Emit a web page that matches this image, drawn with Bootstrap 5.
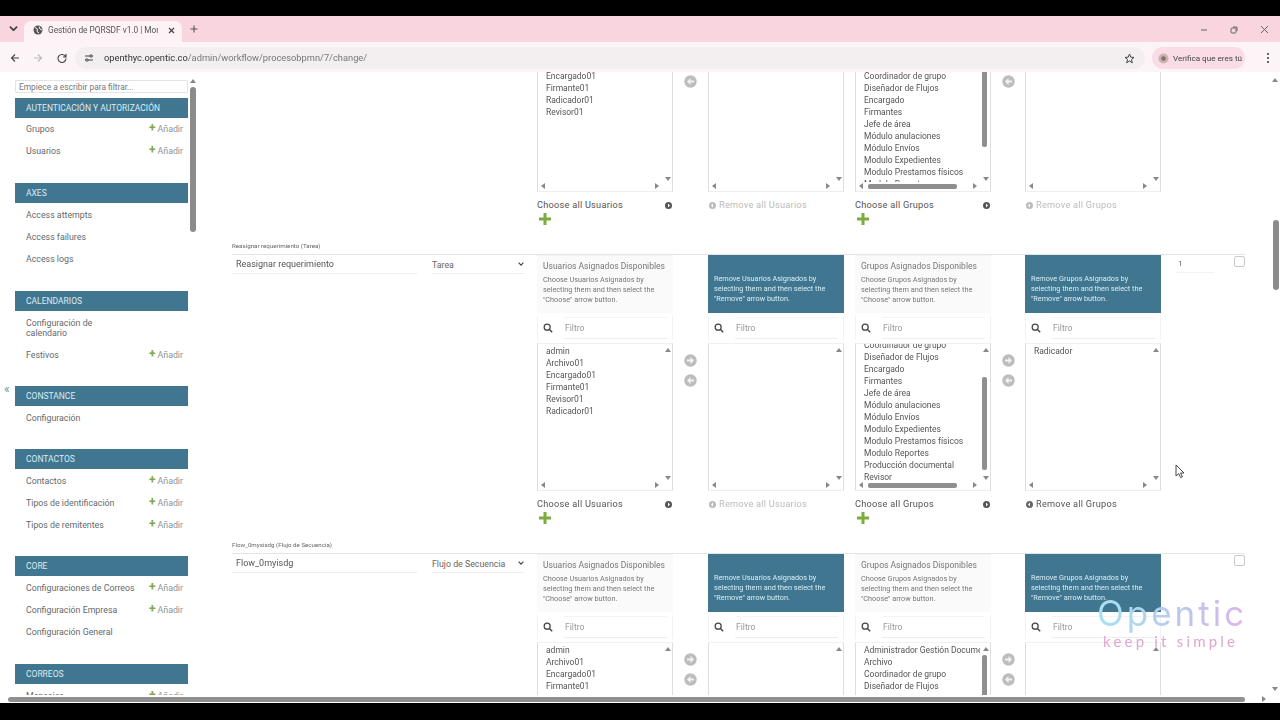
<!DOCTYPE html>
<html lang="es"><head><meta charset="utf-8"><title>Gestión de PQRSDF v1.0</title>
<link rel="stylesheet" href="https://cdn.jsdelivr.net/npm/bootstrap@5.3.0/dist/css/bootstrap.min.css">
<style>
html,body{margin:0;height:720px;overflow:hidden;background:#000}
body{font-family:Roboto,"Liberation Sans",sans-serif;font-size:9px;color:#555}
.shell{width:1280px;height:720px}
.cinema-t{height:16px;background:#000}.cinema-b{height:17px;background:#000}
.tabstrip{height:26px;background:#f9d5e0;padding-left:9px;color:#444}
.nudge{margin-top:9px}
.tabitem{width:158px;height:21px;margin:5px 0 0 6px;background:#fdf3f6;border-radius:7px 7px 0 0;padding:0 7px 3px 9px;font-size:8.3px;white-space:nowrap;overflow:hidden}
.tabname{width:110px;overflow:hidden;margin-left:5px;color:#555}
.winctl{margin-left:auto;gap:22px;padding-right:11px}
.toolbar{height:30px;background:#fdf4f7;padding:2px 10px 0 10px;color:#555}
.omni{width:1070px;height:22px;background:#f3eff0;border-radius:11px;margin-left:8px;padding:0 10px 0 9px;font-size:9.3px;color:#777}
.omni b{font-weight:400;color:#333}
.gap13{margin-left:13px}.gap14{margin-left:14px}.gap10{margin-left:10px}
.verify{width:93px;height:22px;border-radius:11px;background:#f9dce6;margin-left:7px;padding-left:6px;font-size:8.1px;color:#444;white-space:nowrap}
.page{height:623px;background:#fff;overflow:hidden}
.side{width:197px;flex:none;padding:8px 0 0 15px;overflow:hidden;position:relative}
.side-in{width:173px}
.side-filter{height:13px;border:1px solid #e3e3e3;border-radius:1px;font-size:8.4px;padding:0 3px;width:100%;display:block;color:#666;margin-bottom:5px;outline:0}
.side-filter::placeholder{color:#777}
.sect{margin-bottom:20.25px}
.sect:first-of-type{margin-bottom:21.25px}
.sect:first-of-type .sect-h{margin-bottom:0}
.sect-h{height:20px;line-height:20px;background:#417690;color:#d9eef6;padding-left:11px;font-size:8.5px;text-transform:uppercase;margin-bottom:1px}
.sect-r{min-height:22px;padding:6px 5px 6px 11px;font-size:8.8px;color:#5f6a6e;line-height:10px}
.sect-r span:first-child{max-width:90px}
.wadd{color:#8a9499;font-size:8.8px;white-space:nowrap}
.wadd i{color:#7eab3f;font-style:normal;font-weight:700;font-size:12px;margin-right:2px;line-height:8px}
.sbar{position:absolute;background:#8b8b8b;border-radius:3px}
.sbar-s{left:190px;top:15px;width:6px;height:145px}
.arr{position:absolute;width:0;height:0;border-left:3px solid transparent;border-right:3px solid transparent}
.arr.up{border-bottom:4px solid #888}.arr.dn{border-top:4px solid #888}
.arr.lf,.arr.rt{border-top:3px solid transparent;border-bottom:3px solid transparent;border-left:0;border-right:0}
.arr.lf{border-right:4px solid #888}.arr.rt{border-left:4px solid #888}
.fold{position:absolute;left:4px;top:310px;font-size:12px;color:#778f9a;line-height:14px}
.main{width:1073px;flex:none;padding-left:35px;margin-top:-133px}
.flowrow{height:299px;width:1013px}
.flowlabel{height:16px;font-size:6.2px;line-height:14px;color:#666;white-space:nowrap;padding-top:1px}
.flowbody{border-top:1px solid #e4e4e4;padding-top:0}
.namecell{width:186px;height:19px;margin-top:0;border:0;border-bottom:1px solid #efefef;padding:0 4px;font-size:9px;color:#555;line-height:18px;outline:0;background:#fff}
.typecell{width:93px;height:19px;margin-left:14px;font-size:8.8px;color:#666;border:0;padding:1px 0 0;border-bottom:1px solid #efefef;outline:0;background:#fff;line-height:18px;position:relative}
.typecell svg{position:absolute;right:1px;top:7px}
.pick{width:136px;flex:none}
.pick-h{height:58px;padding:5px 6px;background:#fafafa;color:#777;font-size:7.3px;line-height:10px;border-top:1px solid #f3f3f3;overflow:hidden}
.pick-h h6{font-size:8.5px;font-weight:400;line-height:11px;margin:0 0 3px;color:#777;height:11px;white-space:nowrap}
.pick-h p{margin:0}
.pick-h.tone{background:#417690;color:#d6eef7;border:0}
.pick-f{height:24px;margin:3px 0 3px;padding:0 5px 0 5px;border-left:1px solid #f2f2f2;border-right:1px solid #f2f2f2}
.pick-f input{width:103px;height:22px;margin-left:11px;border:0;border-bottom:1px solid #eee;border-top:1px solid #f4f4f4;font-size:8.6px;padding:0 1px;outline:0;background:#fff}
.pick-f input::placeholder{color:#999}
.pick-l{height:148px;border:1px solid #dedede;border-top-color:#f1f1f1;border-bottom-color:#eee;overflow:hidden;padding:1px 0 0 8px;font-size:8.5px;line-height:12px;color:#555;white-space:nowrap;position:relative}
.pick-l .lift{margin-top:-30px}
.vtrack{position:absolute;right:0;top:0;bottom:8px;width:10px;background:#fff}
.htrack{position:absolute;left:0;right:0;bottom:0;height:9px;background:#fff}
.vthumb{position:absolute;right:3px;width:5px;background:#8f8f8f;border-radius:2px}
.hthumb{position:absolute;height:5px;top:2px;background:#8f8f8f;border-radius:2px}
.pick-a{height:14px;margin-top:6px;font-size:9.2px;letter-spacing:.25px;line-height:14px;color:#555;padding-right:1px;white-space:nowrap}
.pick-a.off{color:#bbb;justify-content:flex-start!important;padding-left:1px}
.pick-a.on{justify-content:flex-start!important;padding-left:1px}
.pick-a.off svg,.pick-a.on svg{margin-right:3px}
.pick-p{height:14px;padding-left:2px}
.mover{width:35px;flex:none;padding-top:99px;gap:7px}
.mover.tight{width:34px}
.mover2{width:11px;flex:none}
.mv{width:13px;height:13px;display:block}
.ordercell{width:38px;height:18px;margin-left:15px;border-bottom:1px solid #f3f3f3;font-size:8px;color:#666;padding:0 2px;line-height:18px}
.checker{width:11px;height:11px;border:1px solid #c9c9c9;border-radius:2px;margin:1px 0 0 20px;background:#fff}
.vscroll{position:relative;width:10px;flex:none;background:#fff}
.vs-thumb{position:absolute;left:3px;top:148px;width:6px;height:70px;background:#8b8b8b;border-radius:3px}
.hscroll{height:8px;background:#fff;position:relative}
.hs-thumb{position:absolute;left:8px;top:2px;width:1237px;height:5px;background:#8f8f8f;border-radius:3px}
.brand{position:absolute;left:1097px;top:593px;width:148px;pointer-events:none;line-height:1}
.brand-a{font-family:Inter,sans-serif;font-weight:400;font-size:35px;line-height:41px;letter-spacing:3px;white-space:nowrap;background:linear-gradient(90deg,#a5e3f2,#b8c8ee 55%,#dcb5ec);-webkit-background-clip:text;background-clip:text;color:transparent}
.brand-b{font-family:Lato,sans-serif;font-size:15px;letter-spacing:3.2px;color:#e0a6d0;white-space:nowrap;line-height:14px;margin:0 0 0 6px}
.cursor{position:absolute;left:1175px;top:464px}
.soften{filter:blur(.45px)}
</style></head>
<body>
<svg width="0" height="0" class="position-absolute"><defs>
<symbol id="mv" viewBox="0 0 13 13"><circle cx="6.5" cy="6.5" r="6.2" fill="#bdbdbd"/><path d="M6.5 3 3 6.5 6.5 10V7.6H10V5.4H6.5z" fill="#f2f2f2"/></symbol>
<symbol id="mr" viewBox="0 0 13 13"><circle cx="6.5" cy="6.5" r="6.2" fill="#bdbdbd"/><path d="M6.5 3 10 6.5 6.5 10V7.6H3V5.4H6.5z" fill="#f2f2f2"/></symbol>
<symbol id="mg" viewBox="0 0 12 12"><circle cx="5" cy="5" r="3.6" fill="none" stroke="#444" stroke-width="1.5"/><path d="M8 8l3 3" stroke="#444" stroke-width="1.7"/></symbol>
<symbol id="pl" viewBox="0 0 12 12"><path d="M4.5 0h3v4.5H12v3H7.500V12h-3V7.500H0v-3h4.500z" fill="#7eab3f"/></symbol>
<symbol id="ch" viewBox="0 0 7 7"><circle cx="3.500" cy="3.500" r="3.500" fill="#555"/><path d="M3 1.500 5 3.500 3 5.500z" fill="#fff"/></symbol>
<symbol id="rm" viewBox="0 0 7 7"><circle cx="3.500" cy="3.500" r="3.500" fill="#666"/><path d="M4 1.500 2 3.500 4 5.500z" fill="#fff"/></symbol>
<symbol id="rg" viewBox="0 0 7 7"><circle cx="3.500" cy="3.500" r="3.500" fill="#bbb"/><path d="M4 1.500 2 3.500 4 5.500z" fill="#fff"/></symbol>
<symbol id="dn" viewBox="0 0 8 5"><path d="M.8.8 4 4 7.200.8" fill="none" stroke="#444" stroke-width="1.500"/></symbol>
</defs></svg>
<div class="shell d-flex flex-column position-relative">
<div class="cinema-t"></div>
<div class="tabstrip d-flex align-items-start soften">
 <svg class="nudge" width="9" height="7" viewBox="0 0 8 5"><use href="#dn"/></svg>
 <div class="tabitem d-flex align-items-center">
  <svg width="10" height="10" viewBox="0 0 10 10"><circle cx="5" cy="5" r="4.500" fill="#555"/><path d="M2 2.500 4.500 4 4 6.500 6 8M6 1.500 7 4 9 5" stroke="#fdf3f6" fill="none"/></svg>
  <span class="tabname">Gestión de PQRSDF v1.0 | Mon</span>
  <svg class="ms-auto" width="7" height="7" viewBox="0 0 7 7"><path d="M1 1l5 5M6 1 1 6" stroke="#444" stroke-width="1.200"/></svg>
 </div>
 <svg class="nudge ms-2" width="8" height="8" viewBox="0 0 8 8"><path d="M4 .5v7M.5 4h7" stroke="#555" stroke-width="1.100"/></svg>
 <div class="winctl d-flex align-items-center nudge">
  <svg width="8" height="8" viewBox="0 0 8 8"><path d="M1 4h6" stroke="#666"/></svg>
  <svg width="8" height="8" viewBox="0 0 8 8"><rect x="1" y="2" width="5" height="5" rx="1" fill="none" stroke="#666"/><path d="M3 1h4v4" fill="none" stroke="#666"/></svg>
  <svg width="9" height="9" viewBox="0 0 9 9"><path d="M1 1l7 7M8 1 1 8" stroke="#666"/></svg>
 </div>
</div>
<div class="toolbar d-flex align-items-center soften">
 <svg width="10" height="10" viewBox="0 0 10 10"><path d="M9 5H1.500M5 1.500 1.500 5 5 8.500" fill="none" stroke="#444" stroke-width="1.100"/></svg>
 <svg class="gap13" width="10" height="10" viewBox="0 0 10 10"><path d="M1 5h7.500M5 1.500 8.500 5 5 8.500" fill="none" stroke="#bbb" stroke-width="1.100"/></svg>
 <svg class="gap14" width="10" height="10" viewBox="0 0 10 10"><path d="M8.500 3.500A4 4 0 1 0 9 5.500M9 1v3H6" fill="none" stroke="#444" stroke-width="1.100"/></svg>
 <div class="omni d-flex align-items-center">
  <svg width="10" height="10" viewBox="0 0 10 10"><path d="M1 3h5M8 3h1M1 7h1M4 7h5" stroke="#444"/><circle cx="7" cy="3" r="1.200" fill="none" stroke="#444"/><circle cx="3" cy="7" r="1.200" fill="none" stroke="#444"/></svg>
  <span class="gap10"><b>openthyc.opentic.co</b>/admin/workflow/procesobpmn/7/change/</span>
  <svg class="ms-auto" width="11" height="11" viewBox="0 0 11 11"><path d="M5.500 1 6.800 4.200 10 4.400 7.500 6.500 8.300 9.800 5.500 8 2.700 9.800 3.500 6.500 1 4.400 4.200 4.200z" fill="none" stroke="#444"/></svg>
 </div>
 <div class="verify d-flex align-items-center">
  <svg width="11" height="11" viewBox="0 0 11 11" class="me-1"><circle cx="5.500" cy="5.500" r="5" fill="#a98" opacity=".6"/><circle cx="5.500" cy="5.500" r="2.300" fill="#8c6a78"/></svg>
  Verifica que eres tú
 </div>
 <svg class="ms-auto" width="4" height="12" viewBox="0 0 4 12"><circle cx="2" cy="2" r="1.100" fill="#444"/><circle cx="2" cy="6" r="1.100" fill="#444"/><circle cx="2" cy="10" r="1.100" fill="#444"/></svg>
</div>
<div class="page d-flex soften">
 <aside class="side">
  <div class="side-in">
  <input class="side-filter" placeholder="Empiece a escribir para filtrar...">
  <div class="sect"><div class="sect-h">Autenticación y autorización</div>
   <div class="sect-r d-flex align-items-center justify-content-between"><span>Grupos</span><span class="wadd"><i>+</i>Añadir</span></div>
   <div class="sect-r d-flex align-items-center justify-content-between"><span>Usuarios</span><span class="wadd"><i>+</i>Añadir</span></div></div>
  <div class="sect"><div class="sect-h">Axes</div>
   <div class="sect-r d-flex align-items-center"><span>Access attempts</span></div>
   <div class="sect-r d-flex align-items-center"><span>Access failures</span></div>
   <div class="sect-r d-flex align-items-center"><span>Access logs</span></div></div>
  <div class="sect"><div class="sect-h">Calendarios</div>
   <div class="sect-r d-flex align-items-center"><span>Configuración de calendario</span></div>
   <div class="sect-r d-flex align-items-center justify-content-between"><span>Festivos</span><span class="wadd"><i>+</i>Añadir</span></div></div>
  <div class="sect"><div class="sect-h">Constance</div>
   <div class="sect-r d-flex align-items-center"><span>Configuración</span></div></div>
  <div class="sect"><div class="sect-h">Contactos</div>
   <div class="sect-r d-flex align-items-center justify-content-between"><span>Contactos</span><span class="wadd"><i>+</i>Añadir</span></div>
   <div class="sect-r d-flex align-items-center justify-content-between"><span class="text-nowrap">Tipos de identificación</span><span class="wadd"><i>+</i>Añadir</span></div>
   <div class="sect-r d-flex align-items-center justify-content-between"><span>Tipos de remitentes</span><span class="wadd"><i>+</i>Añadir</span></div></div>
  <div class="sect"><div class="sect-h">Core</div>
   <div class="sect-r d-flex align-items-center justify-content-between"><span class="text-nowrap">Configuraciones de Correos</span><span class="wadd"><i>+</i>Añadir</span></div>
   <div class="sect-r d-flex align-items-center justify-content-between"><span class="text-nowrap">Configuración Empresa</span><span class="wadd"><i>+</i>Añadir</span></div>
   <div class="sect-r d-flex align-items-center"><span class="text-nowrap">Configuración General</span></div></div>
  <div class="sect"><div class="sect-h">Correos</div>
   <div class="sect-r d-flex align-items-center justify-content-between"><span>Mensajes</span><span class="wadd"><i>+</i>Añadir</span></div></div>
  </div>
  <span class="arr up" style="left:190px;top:7px"></span>
  <span class="sbar sbar-s"></span>
  <span class="fold">«</span>
 </aside>
 <main class="main">

  <!-- row 1 -->
  <section class="flowrow">
   <div class="flowlabel">Registrar requerimiento (Tarea)</div>
   <div class="flowbody d-flex align-items-start">
    <div class="namecell">Registrar requerimiento</div>
    <div class="typecell">Tarea<svg width="6" height="4"><use href="#dn"/></svg></div>
    <div class="ms-auto"></div>
    <div class="pick ms-2"><div class="pick-h"><h6>Usuarios Asignados Disponibles</h6><p>Choose Usuarios Asignados by selecting them and then select the "Choose" arrow button.</p></div>
     <div class="pick-f d-flex align-items-center"><svg width="12" height="12"><use href="#mg"/></svg><input placeholder="Filtro"></div>
     <div class="pick-l"><div>admin</div><div>Archivo01</div><div>Encargado01</div><div>Firmante01</div><div>Radicador01</div><div>Revisor01</div>
      <div class="vtrack"><span class="arr up" style="right:1px;top:4px"></span><span class="arr dn" style="right:1px;bottom:2px"></span></div>
      <div class="htrack"><span class="arr lf" style="left:3px;top:1px"></span><span class="arr rt" style="right:13px;top:1px"></span></div></div>
     <div class="pick-a d-flex justify-content-between align-items-center"><span>Choose all Usuarios</span><svg width="7" height="7"><use href="#ch"/></svg></div>
     <div class="pick-p"><svg width="12" height="12"><use href="#pl"/></svg></div></div>
    <div class="mover d-flex flex-column align-items-center"><svg class="mv"><use href="#mr"/></svg><svg class="mv"><use href="#mv"/></svg></div>
    <div class="pick"><div class="pick-h tone"><h6></h6><p>Remove Usuarios Asignados by selecting them and then select the "Remove" arrow button.</p></div>
     <div class="pick-f d-flex align-items-center"><svg width="12" height="12"><use href="#mg"/></svg><input placeholder="Filtro"></div>
     <div class="pick-l"><div class="vtrack"><span class="arr up" style="right:1px;top:4px"></span><span class="arr dn" style="right:1px;bottom:2px"></span></div>
      <div class="htrack"><span class="arr lf" style="left:3px;top:1px"></span><span class="arr rt" style="right:13px;top:1px"></span></div></div>
     <div class="pick-a off d-flex align-items-center"><svg width="7" height="7"><use href="#rg"/></svg><span>Remove all Usuarios</span></div></div>
    <div class="mover2"></div>
    <div class="pick"><div class="pick-h"><h6>Grupos Asignados Disponibles</h6><p>Choose Grupos Asignados by selecting them and then select the "Choose" arrow button.</p></div>
     <div class="pick-f d-flex align-items-center"><svg width="12" height="12"><use href="#mg"/></svg><input placeholder="Filtro"></div>
     <div class="pick-l"><div>Administrador Gestión Documental</div><div>Archivo</div><div>Coordinador de grupo</div><div>Diseñador de Flujos</div><div>Encargado</div><div>Firmantes</div><div>Jefe de área</div><div>Módulo anulaciones</div><div>Módulo Envíos</div><div>Modulo Expedientes</div><div>Modulo Prestamos físicos</div><div>Modulo Reportes</div><div>Producción documental</div><div>Revisor</div>
      <div class="vtrack"><span class="arr up" style="right:1px;top:4px"></span><span class="vthumb" style="top:12px;height:90px"></span><span class="arr dn" style="right:1px;bottom:2px"></span></div>
      <div class="htrack"><span class="arr lf" style="left:3px;top:1px"></span><span class="hthumb" style="left:12px;width:89px"></span><span class="arr rt" style="right:13px;top:1px"></span></div></div>
     <div class="pick-a d-flex justify-content-between align-items-center"><span>Choose all Grupos</span><svg width="7" height="7"><use href="#ch"/></svg></div>
     <div class="pick-p"><svg width="12" height="12"><use href="#pl"/></svg></div></div>
    <div class="mover tight d-flex flex-column align-items-center"><svg class="mv"><use href="#mr"/></svg><svg class="mv"><use href="#mv"/></svg></div>
    <div class="pick"><div class="pick-h tone"><h6></h6><p>Remove Grupos Asignados by selecting them and then select the "Remove" arrow button.</p></div>
     <div class="pick-f d-flex align-items-center"><svg width="12" height="12"><use href="#mg"/></svg><input placeholder="Filtro"></div>
     <div class="pick-l"><div class="vtrack"><span class="arr up" style="right:1px;top:4px"></span><span class="arr dn" style="right:1px;bottom:2px"></span></div>
      <div class="htrack"><span class="arr lf" style="left:3px;top:1px"></span><span class="arr rt" style="right:13px;top:1px"></span></div></div>
     <div class="pick-a off d-flex align-items-center"><svg width="7" height="7"><use href="#rg"/></svg><span>Remove all Grupos</span></div></div>
    <div class="ordercell"></div><div class="checker invisible"></div>
   </div>
  </section>

  <!-- row 2 -->
  <section class="flowrow">
   <div class="flowlabel">Reasignar requerimiento (Tarea)</div>
   <div class="flowbody d-flex align-items-start">
    <div class="namecell">Reasignar requerimiento</div>
    <div class="typecell">Tarea<svg width="6" height="4"><use href="#dn"/></svg></div>
    <div class="ms-auto"></div>
    <div class="pick ms-2"><div class="pick-h"><h6>Usuarios Asignados Disponibles</h6><p>Choose Usuarios Asignados by selecting them and then select the "Choose" arrow button.</p></div>
     <div class="pick-f d-flex align-items-center"><svg width="12" height="12"><use href="#mg"/></svg><input placeholder="Filtro"></div>
     <div class="pick-l"><div>admin</div><div>Archivo01</div><div>Encargado01</div><div>Firmante01</div><div>Revisor01</div><div>Radicador01</div>
      <div class="vtrack"><span class="arr up" style="right:1px;top:4px"></span><span class="arr dn" style="right:1px;bottom:2px"></span></div>
      <div class="htrack"><span class="arr lf" style="left:3px;top:1px"></span><span class="arr rt" style="right:13px;top:1px"></span></div></div>
     <div class="pick-a d-flex justify-content-between align-items-center"><span>Choose all Usuarios</span><svg width="7" height="7"><use href="#ch"/></svg></div>
     <div class="pick-p"><svg width="12" height="12"><use href="#pl"/></svg></div></div>
    <div class="mover d-flex flex-column align-items-center"><svg class="mv"><use href="#mr"/></svg><svg class="mv"><use href="#mv"/></svg></div>
    <div class="pick"><div class="pick-h tone"><h6></h6><p>Remove Usuarios Asignados by selecting them and then select the "Remove" arrow button.</p></div>
     <div class="pick-f d-flex align-items-center"><svg width="12" height="12"><use href="#mg"/></svg><input placeholder="Filtro"></div>
     <div class="pick-l"><div class="vtrack"><span class="arr up" style="right:1px;top:4px"></span><span class="arr dn" style="right:1px;bottom:2px"></span></div>
      <div class="htrack"><span class="arr lf" style="left:3px;top:1px"></span><span class="arr rt" style="right:13px;top:1px"></span></div></div>
     <div class="pick-a off d-flex align-items-center"><svg width="7" height="7"><use href="#rg"/></svg><span>Remove all Usuarios</span></div></div>
    <div class="mover2"></div>
    <div class="pick"><div class="pick-h"><h6>Grupos Asignados Disponibles</h6><p>Choose Grupos Asignados by selecting them and then select the "Choose" arrow button.</p></div>
     <div class="pick-f d-flex align-items-center"><svg width="12" height="12"><use href="#mg"/></svg><input placeholder="Filtro"></div>
     <div class="pick-l"><div class="lift">Administrador Gestión Documental</div><div>Archivo</div><div>Coordinador de grupo</div><div>Diseñador de Flujos</div><div>Encargado</div><div>Firmantes</div><div>Jefe de área</div><div>Módulo anulaciones</div><div>Módulo Envíos</div><div>Modulo Expedientes</div><div>Modulo Prestamos físicos</div><div>Modulo Reportes</div><div>Producción documental</div><div>Revisor</div>
      <div class="vtrack"><span class="arr up" style="right:1px;top:4px"></span><span class="vthumb" style="top:33px;height:93px"></span><span class="arr dn" style="right:1px;bottom:2px"></span></div>
      <div class="htrack"><span class="arr lf" style="left:3px;top:1px"></span><span class="hthumb" style="left:12px;width:89px"></span><span class="arr rt" style="right:13px;top:1px"></span></div></div>
     <div class="pick-a d-flex justify-content-between align-items-center"><span>Choose all Grupos</span><svg width="7" height="7"><use href="#ch"/></svg></div>
     <div class="pick-p"><svg width="12" height="12"><use href="#pl"/></svg></div></div>
    <div class="mover tight d-flex flex-column align-items-center"><svg class="mv"><use href="#mr"/></svg><svg class="mv"><use href="#mv"/></svg></div>
    <div class="pick"><div class="pick-h tone"><h6></h6><p>Remove Grupos Asignados by selecting them and then select the "Remove" arrow button.</p></div>
     <div class="pick-f d-flex align-items-center"><svg width="12" height="12"><use href="#mg"/></svg><input placeholder="Filtro"></div>
     <div class="pick-l"><div>Radicador</div><div class="vtrack"><span class="arr up" style="right:1px;top:4px"></span><span class="arr dn" style="right:1px;bottom:2px"></span></div>
      <div class="htrack"><span class="arr lf" style="left:3px;top:1px"></span><span class="arr rt" style="right:13px;top:1px"></span></div></div>
     <div class="pick-a on d-flex align-items-center"><svg width="7" height="7"><use href="#rm"/></svg><span>Remove all Grupos</span></div></div>
    <div class="ordercell">1</div><div class="checker"></div>
   </div>
  </section>

  <!-- row 3 -->
  <section class="flowrow">
   <div class="flowlabel">Flow_0mysisdg (Flujo de Secuencia)</div>
   <div class="flowbody d-flex align-items-start">
    <div class="namecell">Flow_0myisdg</div>
    <div class="typecell">Flujo de Secuencia<svg width="6" height="4"><use href="#dn"/></svg></div>
    <div class="ms-auto"></div>
    <div class="pick ms-2"><div class="pick-h"><h6>Usuarios Asignados Disponibles</h6><p>Choose Usuarios Asignados by selecting them and then select the "Choose" arrow button.</p></div>
     <div class="pick-f d-flex align-items-center"><svg width="12" height="12"><use href="#mg"/></svg><input placeholder="Filtro"></div>
     <div class="pick-l"><div>admin</div><div>Archivo01</div><div>Encargado01</div><div>Firmante01</div>
      <div class="vtrack"><span class="arr up" style="right:1px;top:4px"></span></div></div></div>
    <div class="mover d-flex flex-column align-items-center"><svg class="mv"><use href="#mr"/></svg><svg class="mv"><use href="#mv"/></svg></div>
    <div class="pick"><div class="pick-h tone"><h6></h6><p>Remove Usuarios Asignados by selecting them and then select the "Remove" arrow button.</p></div>
     <div class="pick-f d-flex align-items-center"><svg width="12" height="12"><use href="#mg"/></svg><input placeholder="Filtro"></div>
     <div class="pick-l"><div class="vtrack"><span class="arr up" style="right:1px;top:4px"></span></div></div></div>
    <div class="mover2"></div>
    <div class="pick"><div class="pick-h"><h6>Grupos Asignados Disponibles</h6><p>Choose Grupos Asignados by selecting them and then select the "Choose" arrow button.</p></div>
     <div class="pick-f d-flex align-items-center"><svg width="12" height="12"><use href="#mg"/></svg><input placeholder="Filtro"></div>
     <div class="pick-l"><div>Administrador Gestión Documental</div><div>Archivo</div><div>Coordinador de grupo</div><div>Diseñador de Flujos</div>
      <div class="vtrack"><span class="arr up" style="right:1px;top:4px"></span><span class="vthumb" style="top:12px;height:90px"></span></div></div></div>
    <div class="mover tight d-flex flex-column align-items-center"><svg class="mv"><use href="#mr"/></svg><svg class="mv"><use href="#mv"/></svg></div>
    <div class="pick"><div class="pick-h tone"><h6></h6><p>Remove Grupos Asignados by selecting them and then select the "Remove" arrow button.</p></div>
     <div class="pick-f d-flex align-items-center"><svg width="12" height="12"><use href="#mg"/></svg><input placeholder="Filtro"></div>
     <div class="pick-l"><div class="vtrack"><span class="arr up" style="right:1px;top:4px"></span></div></div></div>
    <div class="ordercell border-0"></div><div class="checker"></div>
   </div>
  </section>
 </main>
 <div class="vscroll ms-auto"><span class="arr up" style="left:2px;top:6px"></span><span class="vs-thumb"></span><span class="arr dn" style="left:2px;bottom:4px"></span></div>
</div>
<div class="hscroll"><span class="hs-thumb"></span><span class="arr rt" style="left:1262px;top:1px"></span></div>
<div class="cinema-b"></div>
<div class="brand"><div class="brand-a">Opentic</div><div class="brand-b">keep it simple</div></div>
<svg class="cursor" width="10" height="15" viewBox="0 0 10 15"><path d="M1 1v11l2.800-2.400 1.800 4 1.800-.8-1.800-3.800H9z" fill="#fff" stroke="#333" stroke-width=".9"/></svg>
</div>
</body></html>
